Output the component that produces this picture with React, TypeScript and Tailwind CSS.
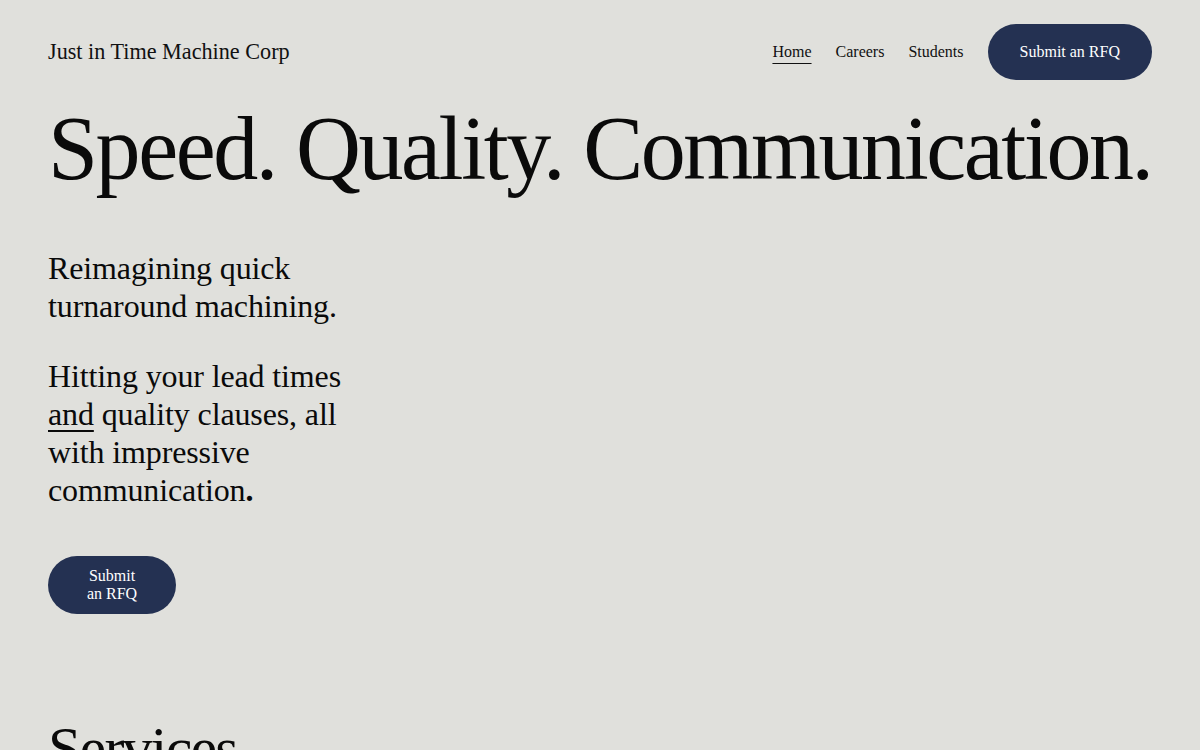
import React from 'react';

const serif = { fontFamily: '"Liberation Serif", "Times New Roman", serif' };

function Header() {
  return (
    <header className="flex h-14 items-center justify-between">
      <a href="#" className="text-[22.2px] leading-none text-[#111]">
        Just in Time Machine Corp
      </a>
      <nav className="flex items-center gap-6 text-base text-[#111]">
        <a href="#" className="underline decoration-1 underline-offset-[6px]">Home</a>
        <a href="#">Careers</a>
        <a href="#">Students</a>
        <a
          href="#"
          className="flex h-14 items-center rounded-full bg-[#243152] px-8 text-base text-white"
        >
          Submit an RFQ
        </a>
      </nav>
    </header>
  );
}

export default function App() {
  return (
    <div className="min-h-screen overflow-hidden bg-[#e0e0dc] text-[#0a0a0a]" style={serif}>
      <div className="px-12 pt-6">
        <Header />

        {/* Hero */}
        <h1 className="mt-6 whitespace-nowrap text-[90px] font-normal leading-none tracking-[-0.027em]">
          Speed. Quality. Communication.
        </h1>

        <div className="mt-[55px] w-[300px] text-[32px] leading-[38px] tracking-[-0.004em]">
          <p>Reimagining quick turnaround machining.</p>
          <p className="mt-8">
            Hitting your lead times <span className="underline decoration-2 underline-offset-[5px]">and</span> quality
            clauses, all with impressive communication<b>.</b>
          </p>
        </div>

        <a
          href="#"
          className="mt-[47px] flex h-[58px] w-[128px] items-center justify-center rounded-full bg-[#243152] px-9 text-center text-base leading-[18px] text-white"
        >
          Submit an RFQ
        </a>

        {/* Services */}
        <h2 className="mt-[104px] text-[60px] font-normal leading-none tracking-[-0.03em]">Services</h2>
        <div className="h-40" />
      </div>
    </div>
  );
}
